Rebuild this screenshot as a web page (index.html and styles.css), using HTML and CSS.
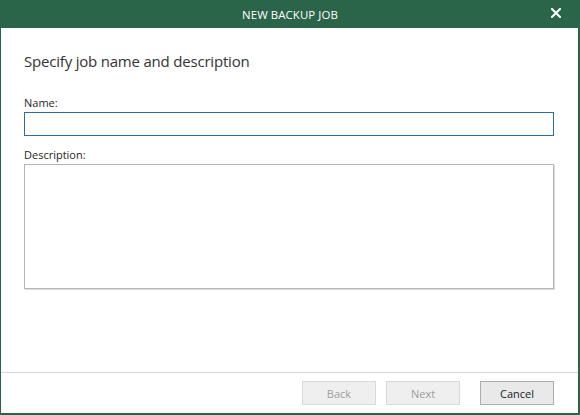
FILE: index.html
```html
<!DOCTYPE html>
<html lang="en">
<head>
  <meta charset="UTF-8">
  <title>New Backup Job</title>
  <link rel="stylesheet" href="styles.css">
</head>
<body>

  <div class="window">
    <!-- Title bar -->
    <header class="titlebar">
      <span class="title">NEW BACKUP JOB</span>
      <button class="close" aria-label="Close">
        <svg width="10" height="10" viewBox="0 0 10 10">
          <path d="M1 1 L9 9 M9 1 L1 9" stroke="#fff" stroke-width="2" stroke-linecap="square"/>
        </svg>
      </button>
    </header>

    <!-- Wizard step -->
    <main class="content">
      <h1 class="step-title">Specify job name and description</h1>

      <label class="field-label" for="jobName">Name:</label>
      <input class="text-input" id="jobName" type="text">

      <label class="field-label" for="jobDesc">Description:</label>
      <textarea class="text-area" id="jobDesc"></textarea>
    </main>

    <!-- Buttons -->
    <footer class="footer">
      <button class="btn" disabled>Back</button>
      <button class="btn" disabled>Next</button>
      <button class="btn btn-cancel">Cancel</button>
    </footer>
  </div>

</body>
</html>
```

FILE: styles.css
```css
body {
  margin: 0;
  background: #fff;
  font-family: 'Open Sans', 'Noto Sans', sans-serif;
  color: #1f1f1f;
}

.window {
  box-sizing: border-box;
  width: 580px;
  height: 415px;
  display: flex;
  flex-direction: column;
  border-left: 1px solid #2b6549;
  border-right: 2px solid #2b6549;
  border-bottom: 2px solid #2b6549;
}

.titlebar {
  height: 28px;
  margin: 0 -2px 0 -1px;
  background: #2b6549;
  display: flex;
  align-items: center;
  justify-content: center;
  position: relative;
}

.title {
  color: #fff;
  font-size: 11.4px;
  letter-spacing: 0.1px;
}

.close {
  position: absolute;
  right: 19px;
  top: 8px;
  padding: 0;
  border: none;
  background: none;
  width: 10px;
  height: 10px;
  display: flex;
}

.content {
  flex: 1;
  padding: 0 24px 0 23px;
  display: flex;
  flex-direction: column;
}

.step-title {
  margin: 22px 0 0;
  font-size: 15px;
  font-weight: normal;
  letter-spacing: -0.2px;
  color: #333;
  line-height: 22px;
}

.field-label {
  font-size: 11px;
  line-height: 15px;
  color: #1f1f1f;
}

.step-title + .field-label {
  margin-top: 23px;
}

.text-input {
  box-sizing: border-box;
  height: 24px;
  margin: 2px 0 0;
  border: 1px solid #2e6ba3;
  outline: none;
  padding: 0 4px;
}

.text-input + .field-label {
  margin-top: 11px;
}

.text-area {
  box-sizing: border-box;
  height: 125px;
  margin: 2px 0 0;
  border: 1px solid #b4b4b4;
  box-shadow: 1px 1px 0 #dcdcdc;
  resize: none;
  outline: none;
}

.footer {
  height: 41px;
  box-sizing: border-box;
  border-top: 1px solid #d7d7d7;
  padding: 8px 24px 0 0;
  display: flex;
  justify-content: flex-end;
  gap: 10px;
}

.btn {
  box-sizing: border-box;
  width: 74px;
  height: 24px;
  font-family: 'Open Sans', 'Noto Sans', sans-serif;
  font-size: 11px;
  background: #efefef;
  border: 1px solid #d9d9d9;
  color: #9d9d9d;
  padding: 0;
}

.btn-cancel {
  margin-left: 10px;
  background: #e9e9e9;
  border-color: #adadad;
  color: #1a1a1a;
}
```
